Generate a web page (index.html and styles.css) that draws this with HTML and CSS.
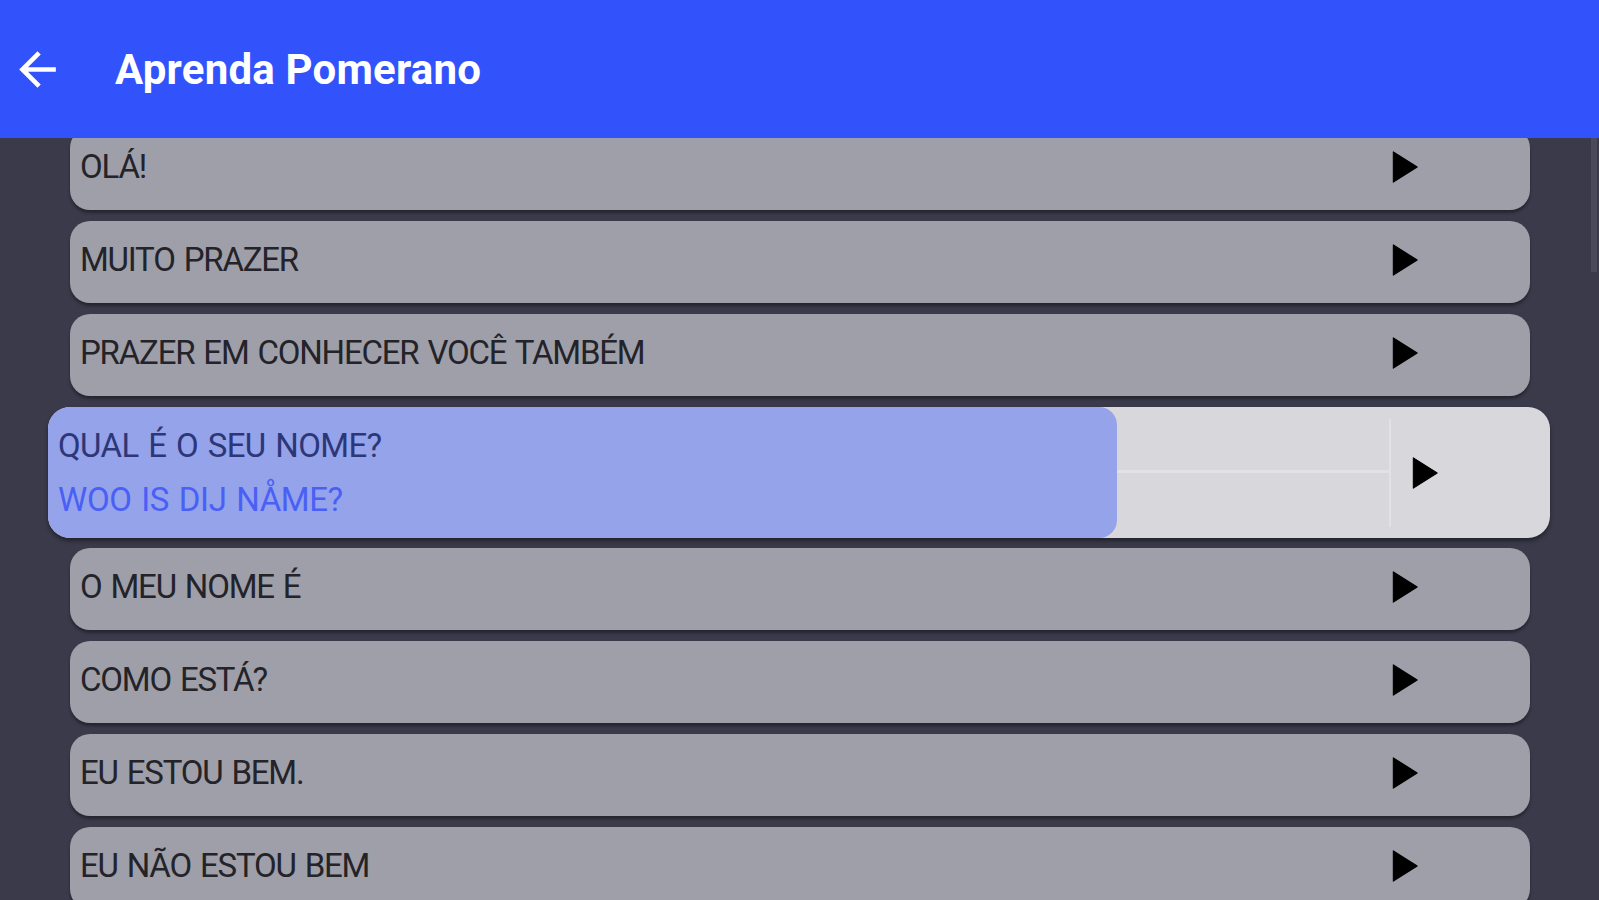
FILE: index.html
```html
<!DOCTYPE html>
<html lang="pt">
<head>
<meta charset="utf-8">
<title>Aprenda Pomerano</title>
<link rel="stylesheet" href="styles.css">
</head>
<body>
<div class="app">
  <header class="topbar">
    <button class="back" aria-label="Voltar">
      <svg viewBox="0 0 24 24" width="55" height="55"><path d="M20 11H7.83l5.59-5.59L12 4l-8 8 8 8 1.41-1.41L7.83 13H20v-2z"/></svg>
    </button>
    <h1 class="title">Aprenda Pomerano</h1>
  </header>
  <main class="content">
    <ul class="list">
      <li class="row"><span class="label">OLÁ!</span><span class="play"><svg viewBox="0 0 24 24"><path d="M8 5v14l11-7z"/></svg></span></li>
      <li class="row"><span class="label">MUITO PRAZER</span><span class="play"><svg viewBox="0 0 24 24"><path d="M8 5v14l11-7z"/></svg></span></li>
      <li class="row"><span class="label">PRAZER EM CONHECER VOCÊ TAMBÉM</span><span class="play"><svg viewBox="0 0 24 24"><path d="M8 5v14l11-7z"/></svg></span></li>
      <li class="row row-active">
        <div class="progress" style="width: 71.2%"></div>
        <div class="active-body">
          <div class="texts">
            <span class="label label-pt">QUAL É O SEU NOME?</span>
            <span class="label label-pom">WOO IS DIJ NÅME?</span>
          </div>
          <span class="play"><svg viewBox="0 0 24 24"><path d="M8 5v14l11-7z"/></svg></span>
        </div>
      </li>
      <li class="row"><span class="label">O MEU NOME É</span><span class="play"><svg viewBox="0 0 24 24"><path d="M8 5v14l11-7z"/></svg></span></li>
      <li class="row"><span class="label">COMO ESTÁ?</span><span class="play"><svg viewBox="0 0 24 24"><path d="M8 5v14l11-7z"/></svg></span></li>
      <li class="row"><span class="label">EU ESTOU BEM.</span><span class="play"><svg viewBox="0 0 24 24"><path d="M8 5v14l11-7z"/></svg></span></li>
      <li class="row"><span class="label">EU NÃO ESTOU BEM</span><span class="play"><svg viewBox="0 0 24 24"><path d="M8 5v14l11-7z"/></svg></span></li>
    </ul>
    <div class="scrollbar"></div>
  </main>
</div>
</body>
</html>
```
FILE: styles.css
```css
* { box-sizing: border-box; }
html, body { margin: 0; padding: 0; }
body {
  width: 1599px;
  height: 900px;
  overflow: hidden;
  background: #3a3a4b;
  font-family: Roboto, "Liberation Sans", sans-serif;
}
.app {
  display: flex;
  flex-direction: column;
  height: 900px;
}
.topbar {
  position: relative;
  z-index: 2;
  height: 138px;
  flex: none;
  background: #3252fb;
  display: flex;
  align-items: center;
  padding-left: 10px;
}
.back {
  width: 55px;
  height: 55px;
  padding: 0;
  border: 0;
  background: none;
  display: flex;
}
.back svg { fill: #ffffff; }
.title {
  margin: 0 0 0 50px;
  color: #ffffff;
  font-family: Roboto, "Liberation Sans", sans-serif;
  font-weight: 700;
  font-size: 42px;
  letter-spacing: 0.2px;
}
.content {
  flex: 1;
  display: flex;
  min-height: 0;
}
.list {
  list-style: none;
  margin: -10px 0 0 0;
  padding: 0 0 0 70px;
  width: 1599px;
  display: flex;
  flex-direction: column;
  gap: 11px;
}
.scrollbar {
  width: 6px;
  height: 134px;
  margin-left: -8px;
  background: #4a4a5c;
  flex: none;
}
.row {
  width: 1460px;
  height: 82px;
  flex: none;
  border-radius: 20px;
  background: #9e9fa8;
  box-shadow: 0 3px 3px rgba(0, 0, 0, 0.35);
  display: flex;
  align-items: center;
  padding: 0 102px 5px 10px;
}
.label {
  flex: 1;
  font-size: 33px;
  color: #232329;
  letter-spacing: -1.2px;
  word-spacing: 2px;
  white-space: nowrap;
}
.play {
  width: 52px;
  height: 52px;
  display: flex;
  flex: none;
}
.play svg {
  width: 52px;
  height: 52px;
  fill: #000000;
  stroke: #000000;
  stroke-width: 0.5;
  stroke-linejoin: round;
}
.row-active {
  width: 1502px;
  height: 131px;
  margin: 0 0 -1px -22px;
  padding: 0;
  display: grid;
  overflow: hidden;
  border-radius: 22px;
  background:
    linear-gradient(#e2e2e6, #e2e2e6) 0 63px / 1342px 3px no-repeat,
    linear-gradient(#e2e2e6, #e2e2e6) 1341px 12px / 2px 108px no-repeat,
    #d8d8dc;
  box-shadow: 0 3px 4px rgba(0, 0, 0, 0.4);
}
.progress {
  grid-area: 1 / 1;
  height: 100%;
  background: #94a3ea;
  border-radius: 0 18px 18px 0;
}
.active-body {
  grid-area: 1 / 1;
  display: flex;
  align-items: center;
  padding: 0 102px 0 10px;
}
.texts {
  flex: 1;
  display: flex;
  flex-direction: column;
  line-height: 54px;
}
.label-pt { color: #2d3777; letter-spacing: -0.6px; }
.label-pom { color: #4a5ff6; letter-spacing: -0.4px; }
```
